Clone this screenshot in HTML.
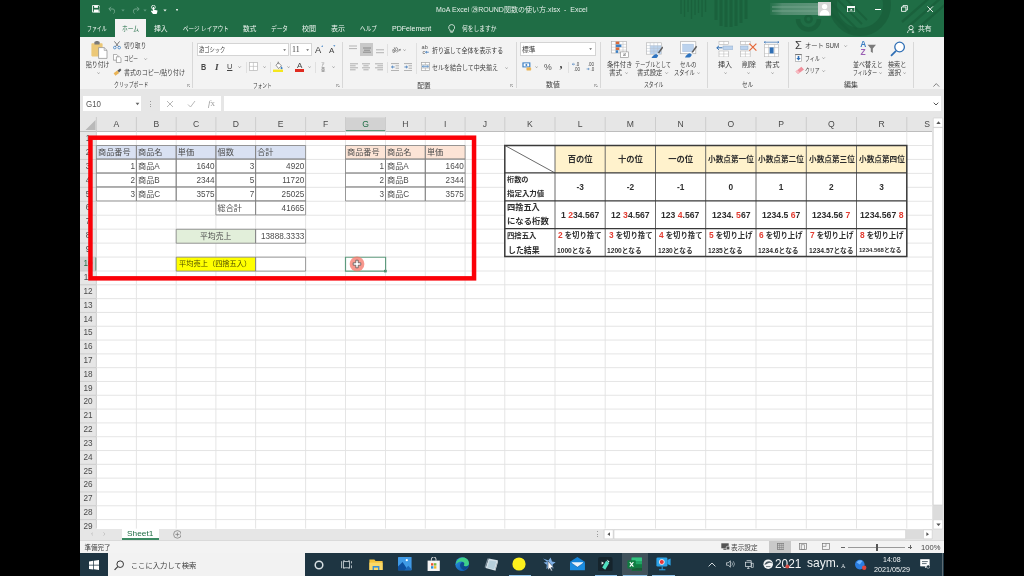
<!DOCTYPE html>
<html lang="ja"><head><meta charset="utf-8"><title>Excel</title><style>
html,body{margin:0;padding:0;background:#000;}
body{width:1024px;height:576px;overflow:hidden;position:relative;font-family:"Liberation Sans","Noto Sans CJK JP",sans-serif;}
#s{position:absolute;left:0;top:0;width:1024px;height:576px;overflow:hidden;background:#000;filter:blur(0.45px);}
#s div,#s svg{position:absolute;}
.ls{font-family:"Liberation Sans",sans-serif}
.t{position:absolute;white-space:nowrap;transform-origin:0 50%;left:0;}
</style></head><body><div id="s">
<div style="left:80.00px;top:0.00px;width:864.00px;height:36.60px;background:#1f6d45;"></div>
<div style="left:80.00px;top:36.60px;width:864.00px;height:52.30px;background:#f3f3f3;"></div>
<div style="left:80.00px;top:88.90px;width:864.00px;height:42.60px;background:#e6e6e6;"></div>
<div style="left:80.00px;top:131.50px;width:864.00px;height:397.20px;background:#fff;"></div>
<div style="left:80.00px;top:528.60px;width:864.00px;height:12.00px;background:#e6e6e6;"></div>
<div style="left:80.00px;top:540.50px;width:864.00px;height:12.80px;background:#f3f3f3;"></div>
<div style="left:80.00px;top:553.20px;width:864.00px;height:22.80px;background:#1e3542;"></div>
<svg style="left:676px;top:0" width="268" height="36.6" viewBox="0 0 268 36.6">
<g fill="none" stroke="#185c39" stroke-opacity="0.7">
<circle cx="184" cy="5" r="27" stroke-width="8"/>
<path d="M122 19a10.500 10.500 0 0 0 21 0" stroke-width="4.500"/>
<circle cx="132.500" cy="19" r="3.200" stroke-width="2.500"/>
<path d="M5 14V0M8.500 17V0M12 12V0M15.500 19V0M19 15V0M22.500 13V0M26 17V0M29.500 12V0" stroke-width="1.300"/>
<path d="M40 20V0M45 26V0M50 27V0M55 27V0M60 26V0M65 23V0M70 19V0" stroke-width="3"/>
<path d="M150 8l24 24M155 3l26 26M162 0l24 24M169 -2l22 22" stroke-width="2"/>
<path d="M226 22L258 -6M232 27L266 -3M239 31L272 2" stroke-width="2.400"/>
</g></svg>
<svg style="left:91.6px;top:5.4px" width="8.6" height="7.6" viewBox="0 0 9 8"><path d="M0.5 0.5h6.6l1.4 1.3v5.7h-8z" fill="none" stroke="#fff" stroke-width="0.9"/><rect x="2.2" y="0.6" width="4" height="2.4" fill="#fff"/><rect x="2" y="4.8" width="5" height="2.8" fill="#fff"/></svg>
<svg style="left:108px;top:5.8px" width="10" height="8" viewBox="0 0 10 8"><path d="M3 0.8L0.8 3l2.2 2.2M1 3h4.5a3 3 0 0 1 0 4.6" fill="none" stroke="#6fa58a" stroke-width="1"/></svg>
<svg style="left:129.5px;top:5.8px" width="10" height="8" viewBox="0 0 10 8"><path d="M7 0.8L9.2 3 7 5.2M9 3H4.5a3 3 0 0 0 0 4.6" fill="none" stroke="#6fa58a" stroke-width="1"/></svg>
<svg style="left:121px;top:8.6px" width="4" height="3" viewBox="0 0 4 3"><path d="M0.3 0.5h3.4L2 2.6z" fill="#5f9a7e"/></svg>
<svg style="left:143px;top:8.6px" width="4" height="3" viewBox="0 0 4 3"><path d="M0.3 0.5h3.4L2 2.6z" fill="#5f9a7e"/></svg>
<svg style="left:163px;top:8.6px" width="4" height="3" viewBox="0 0 4 3"><path d="M0.3 0.5h3.4L2 2.6z" fill="#e8efe9"/></svg>
<svg style="left:150px;top:4.6px" width="8" height="9.4" viewBox="0 0 8 9.4"><circle cx="3.4" cy="2.2" r="1.9" fill="none" stroke="#fff" stroke-width="0.8"/><path d="M2.8 2v4.2L1.6 5.6 0.9 6.3 3 9h3.6c0.6-1 0.9-2 0.9-3.4L4.1 4.8V2z" fill="#fff"/></svg>
<div style="left:176.40px;top:8.60px;width:1.80px;height:0.60px;background:#d5e3da;"></div>
<svg style="left:176.2px;top:9.600px" width="2.200" height="1.700" viewBox="0 0 3 2.2"><path d="M0.2 0.3h2.6L1.5 2z" fill="#d5e3da"/></svg>
<span id="t1" class="t" style="top:4px;font-size:6.7px;line-height:11px;color:#e6efe9;left:435.80px;transform:scaleX(1.0508);">MoA Excel ㉙ROUND関数の使い方.xlsx&nbsp; -&nbsp; Excel</span>
<svg style="left:770px;top:1.8px" width="48" height="14" viewBox="0 0 48 14"><defs><linearGradient id="ug" x1="0" x2="1"><stop offset="0" stop-color="#3f8060" stop-opacity="0.2"/><stop offset="0.25" stop-color="#4f8a6d"/><stop offset="1" stop-color="#5f957b"/></linearGradient></defs><rect x="0" y="1" width="48" height="12" fill="url(#ug)"/><rect x="2" y="4.2" width="46" height="1.6" fill="#7ea993" fill-opacity="0.5"/><rect x="2" y="8.2" width="46" height="1.6" fill="#7ea993" fill-opacity="0.5"/></svg>
<svg style="left:817.8px;top:2px" width="13.2" height="13.6" viewBox="0 0 13.2 13.6"><rect width="13.2" height="13.6" fill="#d6d6d6"/><circle cx="6.6" cy="4.6" r="2.7" fill="#fff"/><path d="M1.6 13.6c0-3.6 2-5.6 5-5.6s5 2 5 5.6z" fill="#fff"/></svg>
<svg style="left:847px;top:5.6px" width="8.4" height="6.6" viewBox="0 0 8.4 6.6"><rect x="0.5" y="0.5" width="7.4" height="5.6" fill="none" stroke="#fff" stroke-width="0.9"/><rect x="0.5" y="0.5" width="7.4" height="1.5" fill="#fff"/><path d="M4.2 2.8l1.5 1.6H2.7z" fill="#fff"/></svg>
<div style="left:874.50px;top:8.80px;width:6.40px;height:0.90px;background:#fff;"></div>
<svg style="left:901px;top:5.4px" width="7" height="7" viewBox="0 0 7 7"><path d="M0.5 2h4.4v4.4H0.5zM2 2V0.6h4.4V5H5" fill="none" stroke="#fff" stroke-width="0.85"/></svg>
<svg style="left:927.4px;top:5.6px" width="6.4" height="6.4" viewBox="0 0 6.4 6.4"><path d="M0.4 0.4l5.6 5.6M6 0.4L0.4 6" stroke="#fff" stroke-width="0.9"/></svg>
<div style="left:114.90px;top:19.00px;width:31.20px;height:17.80px;background:#f3f3f3;"></div>
<span id="t2" class="t" style="top:23px;font-size:6.7px;line-height:11px;color:#f1f6f2;left:86.80px;transform:scaleX(0.7327);">ファイル</span>
<span id="t3" class="t" style="top:23px;font-size:6.7px;line-height:11px;color:#f1f6f2;left:153.70px;transform:scaleX(1.0243);">挿入</span>
<span id="t4" class="t" style="top:23px;font-size:6.7px;line-height:11px;color:#f1f6f2;left:182.50px;transform:scaleX(0.8310);">ページ レイアウト</span>
<span id="t5" class="t" style="top:23px;font-size:6.7px;line-height:11px;color:#f1f6f2;left:243.00px;transform:scaleX(0.9944);">数式</span>
<span id="t6" class="t" style="top:23px;font-size:6.7px;line-height:11px;color:#f1f6f2;left:271.00px;transform:scaleX(0.8474);">データ</span>
<span id="t7" class="t" style="top:23px;font-size:6.7px;line-height:11px;color:#f1f6f2;left:302.20px;transform:scaleX(1.0542);">校閲</span>
<span id="t8" class="t" style="top:23px;font-size:6.7px;line-height:11px;color:#f1f6f2;left:331.00px;transform:scaleX(1.0467);">表示</span>
<span id="t9" class="t" style="top:23px;font-size:6.7px;line-height:11px;color:#f1f6f2;left:360.00px;transform:scaleX(0.8424);">ヘルプ</span>
<span id="t10" class="t" style="top:23px;font-size:6.7px;line-height:11px;color:#f1f6f2;left:391.90px;transform:scaleX(1.0519);">PDFelement</span>
<span id="t11" class="t" style="top:23px;font-size:6.7px;line-height:11px;color:#1f6d45;left:122.00px;transform:scaleX(0.8553);">ホーム</span>
<svg style="left:448px;top:23.6px" width="7.4" height="9.4" viewBox="0 0 7.4 9.4"><path d="M3.7 0.6a2.9 2.9 0 0 1 1.7 5.3v1.3H2V5.9A2.9 2.9 0 0 1 3.7 0.6z" fill="none" stroke="#f1f6f2" stroke-width="0.8"/><path d="M2.3 8.2h2.8M2.7 9.1h2" stroke="#f1f6f2" stroke-width="0.6"/></svg>
<span id="t12" class="t" style="top:23px;font-size:6.7px;line-height:11px;color:#f1f6f2;left:462.20px;transform:scaleX(0.8573);">何をしますか</span>
<svg style="left:906.5px;top:24.8px" width="8" height="8.6" viewBox="0 0 8 8.6"><circle cx="4" cy="2.6" r="2.1" fill="none" stroke="#f1f6f2" stroke-width="0.8"/><path d="M0.5 8.4c0-2.6 1.4-3.8 3.5-3.8 1 0 1.8 0.3 2.4 0.9M6 6v2.4M4.8 7.2h2.4" fill="none" stroke="#f1f6f2" stroke-width="0.8"/></svg>
<span id="t13" class="t" style="top:23px;font-size:6.7px;line-height:11px;color:#f1f6f2;left:917.80px;transform:scaleX(1.0243);">共有</span>
<svg style="left:90.6px;top:40.6px" width="17" height="18" viewBox="0 0 17 18"><rect x="0.4" y="2.2" width="11.2" height="13.2" rx="0.8" fill="#ecc877"/><rect x="3.4" y="0.6" width="5.2" height="3" rx="0.6" fill="#7a7a7a"/><rect x="4.6" y="0" width="2.8" height="1.6" rx="0.5" fill="#7a7a7a"/><path d="M7.6 6.6h5.6l2.8 2.8v8H7.6z" fill="#fff" stroke="#8a8a8a" stroke-width="0.7"/><path d="M13.2 6.6v2.8H16" fill="none" stroke="#8a8a8a" stroke-width="0.6"/></svg>
<span id="t14" class="t" style="top:59px;font-size:6.6px;line-height:11px;color:#3b3b3b;left:85.70px;transform:scaleX(0.8910);">貼り付け</span>
<svg style="left:96.80000000000001px;top:71.8px" width="3.2" height="2.2" viewBox="0 0 3.2 2.2"><path d="M0.3 0.4L1.6 1.7 2.9 0.4" fill="none" stroke="#808080" stroke-width="0.65"/></svg>
<svg style="left:113px;top:41.4px" width="8" height="8.4" viewBox="0 0 8 8.4"><path d="M1.4 0.4L5.6 5.6M6.6 0.4L2.4 5.6" stroke="#555" stroke-width="0.8" fill="none"/><circle cx="1.8" cy="6.6" r="1.3" fill="none" stroke="#3b7fc4" stroke-width="0.8"/><circle cx="6.2" cy="6.6" r="1.3" fill="none" stroke="#3b7fc4" stroke-width="0.8"/></svg>
<span id="t15" class="t" style="top:40px;font-size:6.6px;line-height:11px;color:#3b3b3b;left:123.80px;transform:scaleX(0.8417);">切り取り</span>
<svg style="left:113.2px;top:54.2px" width="8.4" height="9" viewBox="0 0 8.4 9"><path d="M0.4 0.4h3.2l1.4 1.4v4.4H0.4z" fill="#fff" stroke="#8a8a8a" stroke-width="0.7"/><path d="M3.4 2.8h3.2L8 4.2v4.4H3.4z" fill="#fff" stroke="#8a8a8a" stroke-width="0.7"/></svg>
<span id="t16" class="t" style="top:53px;font-size:6.6px;line-height:11px;color:#3b3b3b;left:123.80px;transform:scaleX(0.7077);">コピー</span>
<svg style="left:144.4px;top:58.4px" width="3.2" height="2.2" viewBox="0 0 3.2 2.2"><path d="M0.3 0.4L1.6 1.7 2.9 0.4" fill="none" stroke="#808080" stroke-width="0.65"/></svg>
<svg style="left:113.2px;top:68px" width="9" height="8.4" viewBox="0 0 9 8.4"><path d="M0.6 5.2l3.6-2.6 2 2.4-3.8 2.8z" fill="#eab456"/><path d="M4.4 2.6l2.8-2 1.2 1.4-2.4 2.6z" fill="#555"/></svg>
<span id="t17" class="t" style="top:67px;font-size:6.6px;line-height:11px;color:#3b3b3b;left:123.80px;transform:scaleX(0.8985);">書式のコピー/貼り付け</span>
<span id="t18" class="t" style="top:79px;font-size:6.6px;line-height:11px;color:#3b3b3b;left:114.30px;transform:scaleX(0.7431);">クリップボード</span>
<svg style="left:186.6px;top:83.6px" width="3.6" height="3.6" viewBox="0 0 3.6 3.6"><path d="M0.3 0.3V3M0.3 0.3H3M1.4 1.4l1.8 1.8M3.3 1.7v1.6H1.7" fill="none" stroke="#777" stroke-width="0.55"/></svg>
<div style="left:192.30px;top:41.50px;width:0.80px;height:46.00px;background:#d8d8d8;"></div>
<div style="left:197.00px;top:42.60px;width:91.80px;height:13.70px;background:#fff;box-sizing:border-box;border:0.8px solid #d4d4d4;"></div>
<div style="left:290.00px;top:42.60px;width:21.60px;height:13.70px;background:#fff;box-sizing:border-box;border:0.8px solid #d4d4d4;"></div>
<span id="t19" class="t" style="top:44px;font-size:6.6px;line-height:11px;color:#3b3b3b;left:198.60px;transform:scaleX(0.8008);">游ゴシック</span>
<span id="t20" class="t" style="top:44px;font-size:7.2px;line-height:12px;color:#3b3b3b;font-family:'Liberation Serif',serif;left:291.80px;transform:scaleX(1.0980);">11</span>
<svg style="left:282.9px;top:48.6px" width="3.2" height="2.2" viewBox="0 0 3.2 2.2"><path d="M0.2 0.3h2.8L1.6 2z" fill="#666"/></svg>
<svg style="left:305.9px;top:48.6px" width="3.2" height="2.2" viewBox="0 0 3.2 2.2"><path d="M0.2 0.3h2.8L1.6 2z" fill="#666"/></svg>
<span id="t21" class="t" style="top:43px;font-size:8.6px;line-height:14px;color:#3b3b3b;left:315.20px;transform:scaleX(1.0812);">A</span>
<svg style="left:320.6px;top:44.8px" width="2.6" height="2" viewBox="0 0 2.6 2"><path d="M0.2 1.8L1.3 0.3 2.4 1.8z" fill="#3b7fc4"/></svg>
<span id="t22" class="t" style="top:44px;font-size:7.4px;line-height:13px;color:#3b3b3b;left:328.60px;transform:scaleX(1.0734);">A</span>
<svg style="left:333.2px;top:45px" width="2.6" height="2" viewBox="0 0 2.6 2"><path d="M0.2 0.3L1.3 1.8 2.4 0.3z" fill="#3b7fc4"/></svg>
<span id="t23" class="t" style="top:61px;font-size:8.2px;line-height:13px;color:#444;font-weight:700;left:201.00px;transform:scaleX(0.8781);">B</span>
<span id="t24" class="t" style="top:61px;font-size:8.4px;line-height:13px;color:#444;font-weight:700;font-family:'Liberation Serif',serif;left:214.60px;transform:scaleX(1.1024);"><i>I</i></span>
<span id="t25" class="t" style="top:60px;font-size:8px;line-height:13px;color:#444;left:226.80px;transform:scaleX(0.9341);"><u>U</u></span>
<svg style="left:238.4px;top:66.2px" width="3.2" height="2.2" viewBox="0 0 3.2 2.2"><path d="M0.3 0.4L1.6 1.7 2.9 0.4" fill="none" stroke="#808080" stroke-width="0.65"/></svg>
<div style="left:246.00px;top:61.50px;width:0.80px;height:11.00px;background:#e0e0e0;"></div>
<svg style="left:249.4px;top:62.2px" width="8.8" height="8.8" viewBox="0 0 8.8 8.8"><rect x="0.4" y="0.4" width="8" height="8" fill="#fff" stroke="#b5b5b5" stroke-width="0.7"/><path d="M4.4 0.4v8M0.4 4.4h8" stroke="#b5b5b5" stroke-width="0.6"/></svg>
<svg style="left:262.59999999999997px;top:66.2px" width="3.2" height="2.2" viewBox="0 0 3.2 2.2"><path d="M0.3 0.4L1.6 1.7 2.9 0.4" fill="none" stroke="#808080" stroke-width="0.65"/></svg>
<div style="left:270.20px;top:61.50px;width:0.80px;height:11.00px;background:#e0e0e0;"></div>
<svg style="left:273px;top:60.6px" width="10.4" height="11.2" viewBox="0 0 10.4 11.2"><path d="M3 4.2L5.4 1.6 8.4 4.8 5.6 7.6z" fill="#fff" stroke="#666" stroke-width="0.7"/><path d="M5.2 0.6v2.6" stroke="#666" stroke-width="0.7"/><path d="M8.6 5.2c0.6 1 1 1.5 1 2a1 1 0 0 1-2 0c0-0.5 0.4-1 1-2z" fill="#3b7fc4"/><rect x="0" y="8.6" width="10.2" height="2.4" fill="#f4e61e"/></svg>
<svg style="left:286.59999999999997px;top:66.2px" width="3.2" height="2.2" viewBox="0 0 3.2 2.2"><path d="M0.3 0.4L1.6 1.7 2.9 0.4" fill="none" stroke="#808080" stroke-width="0.65"/></svg>
<span id="t26" class="t" style="top:59px;font-size:7.6px;line-height:13px;color:#444;left:296.60px;transform:scaleX(1.0634);">A</span>
<div style="left:294.70px;top:69.20px;width:9.40px;height:2.40px;background:#e02b20;"></div>
<svg style="left:308.0px;top:66.2px" width="3.2" height="2.2" viewBox="0 0 3.2 2.2"><path d="M0.3 0.4L1.6 1.7 2.9 0.4" fill="none" stroke="#808080" stroke-width="0.65"/></svg>
<div style="left:315.00px;top:61.50px;width:0.80px;height:11.00px;background:#e0e0e0;"></div>
<span id="t27" class="t" style="top:60px;font-size:4.2px;line-height:9px;color:#666;left:321.40px;transform:scaleX(0.8565);">ア</span>
<span id="t28" class="t" style="top:65px;font-size:4.6px;line-height:9px;color:#666;left:321.20px;transform:scaleX(0.9546);">亜</span>
<svg style="left:332.2px;top:66.2px" width="3.2" height="2.2" viewBox="0 0 3.2 2.2"><path d="M0.3 0.4L1.6 1.7 2.9 0.4" fill="none" stroke="#808080" stroke-width="0.65"/></svg>
<span id="t29" class="t" style="top:80px;font-size:6.6px;line-height:11px;color:#3b3b3b;left:253.30px;transform:scaleX(0.7090);">フォント</span>
<svg style="left:336px;top:83.6px" width="3.6" height="3.6" viewBox="0 0 3.6 3.6"><path d="M0.3 0.3V3M0.3 0.3H3M1.4 1.4l1.8 1.8M3.3 1.7v1.6H1.7" fill="none" stroke="#777" stroke-width="0.55"/></svg>
<div style="left:341.90px;top:41.50px;width:0.80px;height:46.00px;background:#d8d8d8;"></div>
<svg style="left:349.4px;top:44.6px" width="8" height="9" viewBox="0 0 8 9"><path d="M0 1H8" stroke="#a2a2a2" stroke-width="0.8"/><path d="M0 3.6H8" stroke="#a2a2a2" stroke-width="0.8"/></svg>
<div style="left:360.20px;top:43.00px;width:12.80px;height:13.30px;background:#c9c9c9;"></div>
<svg style="left:362.6px;top:45px" width="8" height="9" viewBox="0 0 8 9"><path d="M0 3H8" stroke="#7a7a7a" stroke-width="0.8"/><path d="M1 5.2H7" stroke="#7a7a7a" stroke-width="0.8"/><path d="M0 7.2H8" stroke="#7a7a7a" stroke-width="0.8"/></svg>
<svg style="left:375.6px;top:46px" width="8" height="9" viewBox="0 0 8 9"><path d="M0 3.8H8" stroke="#a2a2a2" stroke-width="0.8"/><path d="M0 6.7H8" stroke="#a2a2a2" stroke-width="0.8"/></svg>
<div style="left:387.20px;top:43.50px;width:0.80px;height:12.00px;background:#e0e0e0;"></div>
<svg style="left:391.6px;top:45px" width="9" height="8.4" viewBox="0 0 9 8.4"><text x="-0.4" y="6.200" font-size="6.200" fill="#505050" transform="rotate(-32 4 5)" class="ls">ab</text><path d="M4.6 7.4L8.4 4.4M8.4 4.4l-1.8 0.2M8.4 4.4l-0.5 1.7" stroke="#666" stroke-width="0.6" fill="none"/></svg>
<svg style="left:402.79999999999995px;top:49.0px" width="3.2" height="2.2" viewBox="0 0 3.2 2.2"><path d="M0.3 0.4L1.6 1.7 2.9 0.4" fill="none" stroke="#808080" stroke-width="0.65"/></svg>
<svg style="left:349.7px;top:62.6px" width="8" height="9" viewBox="0 0 8 9"><path d="M0 0.8H8" stroke="#9c9c9c" stroke-width="0.8"/><path d="M0 2.8H5.6" stroke="#9c9c9c" stroke-width="0.8"/><path d="M0 4.8H8" stroke="#9c9c9c" stroke-width="0.8"/><path d="M0 6.8H5.6" stroke="#9c9c9c" stroke-width="0.8"/></svg>
<svg style="left:362px;top:62.6px" width="8" height="9" viewBox="0 0 8 9"><path d="M0 0.8H8" stroke="#9c9c9c" stroke-width="0.8"/><path d="M1.4 2.8H6.6" stroke="#9c9c9c" stroke-width="0.8"/><path d="M0 4.8H8" stroke="#9c9c9c" stroke-width="0.8"/><path d="M1.4 6.8H6.6" stroke="#9c9c9c" stroke-width="0.8"/></svg>
<svg style="left:375.2px;top:62.6px" width="8" height="9" viewBox="0 0 8 9"><path d="M0 0.8H8" stroke="#9c9c9c" stroke-width="0.8"/><path d="M2.4 2.8H8" stroke="#9c9c9c" stroke-width="0.8"/><path d="M0 4.8H8" stroke="#9c9c9c" stroke-width="0.8"/><path d="M2.4 6.8H8" stroke="#9c9c9c" stroke-width="0.8"/></svg>
<div style="left:387.20px;top:61.50px;width:0.80px;height:11.00px;background:#e0e0e0;"></div>
<svg style="left:391px;top:62.6px" width="8.2" height="8.4" viewBox="0 0 8.2 8.4"><path d="M0 0.6h8.2M4.6 2.8h3.6M4.6 5.2h3.6M0 7.6h8.2" stroke="#9c9c9c" stroke-width="0.8"/><path d="M3.6 4H0.6M0.6 4l1.4-1.3M0.6 4l1.4 1.3" stroke="#2f6fb5" stroke-width="0.8" fill="none"/></svg>
<svg style="left:404.2px;top:62.6px" width="8.2" height="8.4" viewBox="0 0 8.2 8.4"><path d="M0 0.6h8.2M4.6 2.8h3.6M4.6 5.2h3.6M0 7.6h8.2" stroke="#9c9c9c" stroke-width="0.8"/><path d="M0.4 4h3M3.4 4L2 2.7M3.4 4L2 5.3" stroke="#2f6fb5" stroke-width="0.8" fill="none"/></svg>
<div style="left:416.20px;top:43.00px;width:0.80px;height:31.00px;background:#e0e0e0;"></div>
<svg style="left:421.4px;top:44.6px" width="8.8" height="9.4" viewBox="0 0 8.8 9.4"><text x="0.600" y="4.400" font-size="5.600" fill="#505050" class="ls">ab</text><text x="1.400" y="8.800" font-size="5.200" fill="#505050" class="ls">c</text><path d="M4.600 7.200h3.200M4.600 7.200l1.200-1M4.600 7.200l1.200 1" stroke="#2f6fb5" stroke-width="0.800" fill="none"/></svg>
<span id="t30" class="t" style="top:45px;font-size:6.6px;line-height:11px;color:#3b3b3b;left:432.30px;transform:scaleX(0.9020);">折り返して全体を表示する</span>
<svg style="left:420.9px;top:62.4px" width="8.8" height="8.8" viewBox="0 0 8.8 8.8"><rect x="0.4" y="0.4" width="8" height="8" fill="#fff" stroke="#a4a4a4" stroke-width="0.7"/><rect x="0.7" y="2.900" width="7.400" height="3" fill="#dbe8f5"/><path d="M0.4 2.8h8M0.4 6h8M4.4 0.4v2.4M4.4 6v2.4" stroke="#a4a4a4" stroke-width="0.6"/><path d="M1.4 4.4h6M1.4 4.4l1-0.8M1.4 4.4l1 0.8M7.4 4.4l-1-0.8M7.4 4.4l-1 0.8" stroke="#2f6fb5" stroke-width="0.55" fill="none"/></svg>
<span id="t31" class="t" style="top:62px;font-size:6.6px;line-height:11px;color:#3b3b3b;left:432.30px;transform:scaleX(0.9109);">セルを結合して中央揃え</span>
<svg style="left:504.59999999999997px;top:66.8px" width="3.2" height="2.2" viewBox="0 0 3.2 2.2"><path d="M0.3 0.4L1.6 1.7 2.9 0.4" fill="none" stroke="#808080" stroke-width="0.65"/></svg>
<span id="t32" class="t" style="top:80px;font-size:6.6px;line-height:11px;color:#3b3b3b;left:417.30px;">配置</span>
<svg style="left:509.6px;top:83.6px" width="3.6" height="3.6" viewBox="0 0 3.6 3.6"><path d="M0.3 0.3V3M0.3 0.3H3M1.4 1.4l1.8 1.8M3.3 1.7v1.6H1.7" fill="none" stroke="#777" stroke-width="0.55"/></svg>
<div style="left:515.50px;top:41.50px;width:0.80px;height:46.00px;background:#d8d8d8;"></div>
<div style="left:520.20px;top:42.40px;width:75.40px;height:13.70px;background:#fff;box-sizing:border-box;border:0.8px solid #d4d4d4;"></div>
<span id="t33" class="t" style="top:44px;font-size:6.6px;line-height:11px;color:#3b3b3b;left:522.00px;transform:scaleX(1.0161);">標準</span>
<svg style="left:589.4px;top:48.4px" width="3.2" height="2.2" viewBox="0 0 3.2 2.2"><path d="M0.2 0.3h2.8L1.6 2z" fill="#666"/></svg>
<svg style="left:521.6px;top:62.2px" width="10" height="9" viewBox="0 0 10 9"><rect x="0.4" y="0.4" width="8" height="5" fill="#3b7fc4"/><rect x="1.6" y="1.4" width="5.6" height="3" fill="#fff"/><circle cx="4.4" cy="2.9" r="1" fill="#3b7fc4"/><ellipse cx="6.800" cy="6.200" rx="2.600" ry="0.900" fill="#eab456"/><ellipse cx="6.800" cy="7.700" rx="2.600" ry="0.900" fill="#eab456"/></svg>
<svg style="left:534.8px;top:66.4px" width="3.2" height="2.2" viewBox="0 0 3.2 2.2"><path d="M0.3 0.4L1.6 1.7 2.9 0.4" fill="none" stroke="#808080" stroke-width="0.65"/></svg>
<span id="t34" class="t" style="top:60px;font-size:8.6px;line-height:14px;color:#555;left:544.20px;transform:scaleX(1.0188);">%</span>
<span id="t35" class="t" style="top:55px;font-size:12px;line-height:18px;color:#444;font-weight:700;font-family:'Liberation Serif',serif;left:559.40px;">,</span>
<div style="left:568.20px;top:61.50px;width:0.80px;height:11.00px;background:#e0e0e0;"></div>
<svg style="left:572px;top:62.4px" width="9.6" height="9" viewBox="0 0 9.6 9"><text x="3.4" y="3.8" font-size="4.5" fill="#444" class="ls">.0</text><text x="1.8" y="8.6" font-size="4.5" fill="#444" class="ls">.00</text><path d="M3 2.2H0.4M0.4 2.2l1-0.9M0.4 2.2l1 0.9" stroke="#2f6fb5" stroke-width="0.6" fill="none"/></svg>
<svg style="left:586px;top:62.4px" width="9.6" height="9" viewBox="0 0 9.6 9"><text x="1.8" y="3.8" font-size="4.5" fill="#444" class="ls">.00</text><text x="4.6" y="8.6" font-size="4.5" fill="#444" class="ls">.0</text><path d="M0.6 7h2.6M3.2 7l-1-0.9M3.2 7l-1 0.9" stroke="#2f6fb5" stroke-width="0.6" fill="none"/></svg>
<span id="t36" class="t" style="top:79px;font-size:6.6px;line-height:11px;color:#3b3b3b;left:546.00px;transform:scaleX(1.0464);">数値</span>
<svg style="left:594px;top:83.6px" width="3.6" height="3.6" viewBox="0 0 3.6 3.6"><path d="M0.3 0.3V3M0.3 0.3H3M1.4 1.4l1.8 1.8M3.3 1.7v1.6H1.7" fill="none" stroke="#777" stroke-width="0.55"/></svg>
<div style="left:599.80px;top:41.50px;width:0.80px;height:46.00px;background:#d8d8d8;"></div>
<svg style="left:611px;top:40.8px" width="18.4" height="17" viewBox="0 0 18.4 17"><rect x="0.4" y="0.4" width="15" height="11.6" fill="#fff" stroke="#a8a8a8" stroke-width="0.6"/><path d="M0.4 3.3h15M0.4 6.2h15M0.4 9.1h15M4.6 0.4v11.6M8.4 0.4v11.6M12 0.4v11.6" stroke="#b8b8b8" stroke-width="0.5"/><rect x="4.8" y="0.6" width="3.4" height="2.6" fill="#d86a3a"/><rect x="4.8" y="3.5" width="5.6" height="2.6" fill="#3b7fc4"/><rect x="4.8" y="6.4" width="3.4" height="2.6" fill="#d86a3a"/><rect x="4.8" y="9.3" width="2.4" height="2.6" fill="#3b7fc4"/><rect x="9.600" y="10.900" width="7.800" height="5.400" fill="#fff" stroke="#8a8a8a" stroke-width="0.600"/><path d="M12.600 15l2-2.800M12 13h3M12 14.400h3" stroke="#666" stroke-width="0.500"/></svg>
<span id="t37" class="t" style="top:59px;font-size:6.6px;line-height:11px;color:#3b3b3b;left:606.70px;transform:scaleX(0.9592);">条件付き</span>
<span id="t38" class="t" style="top:67px;font-size:6.6px;line-height:11px;color:#3b3b3b;left:609.20px;transform:scaleX(0.9858);">書式</span>
<svg style="left:625.0px;top:72.0px" width="3.2" height="2.2" viewBox="0 0 3.2 2.2"><path d="M0.3 0.4L1.6 1.7 2.9 0.4" fill="none" stroke="#808080" stroke-width="0.65"/></svg>
<svg style="left:645.6px;top:40.8px" width="17.6" height="17.6" viewBox="0 0 17.6 17.6"><rect x="0.400" y="1.800" width="15" height="11.400" fill="#fff" stroke="#b0b0b0" stroke-width="0.600"/><rect x="4.200" y="4.600" width="11" height="8.400" fill="#bcd3ee"/><path d="M0.400 4.600h15M0.400 7.400h15M0.400 10.200h15M4.200 1.800v11.400M7.900 1.800v11.400M11.600 1.800v11.400" stroke="#b4bfcc" stroke-width="0.500"/><path d="M11.400 12.200L16.200 5.600l1.200 0.900-4.700 6.600z" fill="#5c5c5c"/><path d="M5.400 17.200c0.800-2 2.600-3.800 5-4.200l1.800 1.200c-0.400 1.800-1.400 2.800-2.600 3z" fill="#2f74c0"/><path d="M10.600 13l1.400-1.200 1 0.800-0.800 1.600z" fill="#e8eef5"/></svg>
<span id="t39" class="t" style="top:59px;font-size:6.6px;line-height:11px;color:#3b3b3b;left:635.00px;transform:scaleX(0.7901);">テーブルとして</span>
<span id="t40" class="t" style="top:67px;font-size:6.6px;line-height:11px;color:#3b3b3b;left:637.00px;transform:scaleX(0.9630);">書式設定</span>
<svg style="left:665.4px;top:72.0px" width="3.2" height="2.2" viewBox="0 0 3.2 2.2"><path d="M0.3 0.4L1.6 1.7 2.9 0.4" fill="none" stroke="#808080" stroke-width="0.65"/></svg>
<svg style="left:680px;top:40.8px" width="17.6" height="17.6" viewBox="0 0 17.6 17.6"><rect x="0.400" y="0.700" width="15.400" height="12" fill="#fff" stroke="#b0b0b0" stroke-width="0.700"/><rect x="2.700" y="3.100" width="10.800" height="7.600" fill="#bcd3ee" stroke="#9db5d2" stroke-width="0.400"/><path d="M11.200 11.400L16 4.800l1.200 0.900-4.700 6.600z" fill="#5c5c5c"/><path d="M5 16.400c0.800-2 2.600-3.800 5-4.200l1.800 1.200c-0.400 1.800-1.400 2.800-2.600 3z" fill="#2f74c0"/><path d="M10.400 12.200l1.400-1.200 1 0.800-0.800 1.600z" fill="#e8eef5"/></svg>
<span id="t41" class="t" style="top:59px;font-size:6.6px;line-height:11px;color:#3b3b3b;left:680.00px;transform:scaleX(0.8341);">セルの</span>
<span id="t42" class="t" style="top:67px;font-size:6.6px;line-height:11px;color:#3b3b3b;left:674.00px;transform:scaleX(0.7810);">スタイル</span>
<svg style="left:697.0px;top:72.0px" width="3.2" height="2.2" viewBox="0 0 3.2 2.2"><path d="M0.3 0.4L1.6 1.7 2.9 0.4" fill="none" stroke="#808080" stroke-width="0.65"/></svg>
<span id="t43" class="t" style="top:79px;font-size:6.6px;line-height:11px;color:#3b3b3b;left:643.80px;transform:scaleX(0.7393);">スタイル</span>
<div style="left:706.90px;top:41.50px;width:0.80px;height:46.00px;background:#d8d8d8;"></div>
<svg style="left:715.6px;top:40.8px" width="17.6" height="16.4" viewBox="0 0 17.6 16.4"><rect x="3" y="0.4" width="9.6" height="3.2" fill="#fff" stroke="#b4b4b4" stroke-width="0.6"/><path d="M7.8 0.4v3.2" stroke="#b4b4b4" stroke-width="0.5"/><rect x="3" y="10" width="9.6" height="6" fill="#fff" stroke="#b4b4b4" stroke-width="0.6"/><path d="M7.8 10v6M3 13h9.6" stroke="#b4b4b4" stroke-width="0.5"/><rect x="7" y="5" width="10" height="3.6" fill="#bcd3ee" stroke="#8ea9c9" stroke-width="0.5"/><path d="M6.4 6.8H0.8M0.8 6.8l2.2-2M0.8 6.8l2.2 2" stroke="#2f6fb5" stroke-width="1" fill="none"/></svg>
<span id="t44" class="t" style="top:59px;font-size:6.6px;line-height:11px;color:#3b3b3b;left:717.60px;transform:scaleX(1.0692);">挿入</span>
<svg style="left:723.5px;top:71.8px" width="3.2" height="2.2" viewBox="0 0 3.2 2.2"><path d="M0.3 0.4L1.6 1.7 2.9 0.4" fill="none" stroke="#808080" stroke-width="0.65"/></svg>
<svg style="left:740.2px;top:40.8px" width="17.6" height="16.4" viewBox="0 0 17.6 16.4"><rect x="0.6" y="0.4" width="9.6" height="3.2" fill="#fff" stroke="#b4b4b4" stroke-width="0.6"/><path d="M5.4 0.4v3.2" stroke="#b4b4b4" stroke-width="0.5"/><rect x="0.6" y="10" width="9.6" height="6" fill="#fff" stroke="#b4b4b4" stroke-width="0.6"/><path d="M5.4 10v6M0.6 13h9.6" stroke="#b4b4b4" stroke-width="0.5"/><rect x="0.6" y="5" width="7.4" height="3.6" fill="#bcd3ee" stroke="#8ea9c9" stroke-width="0.5"/><path d="M9.4 2.6l7 7M16.4 2.6l-7 7" stroke="#e5683a" stroke-width="1.200" fill="none"/></svg>
<span id="t45" class="t" style="top:59px;font-size:6.6px;line-height:11px;color:#3b3b3b;left:741.50px;transform:scaleX(1.0768);">削除</span>
<svg style="left:747.1999999999999px;top:71.8px" width="3.2" height="2.2" viewBox="0 0 3.2 2.2"><path d="M0.3 0.4L1.6 1.7 2.9 0.4" fill="none" stroke="#808080" stroke-width="0.65"/></svg>
<svg style="left:763.4px;top:40.8px" width="17.6" height="16.4" viewBox="0 0 17.6 16.4"><rect x="1.6" y="3.4" width="14" height="12.4" fill="#fff" stroke="#b4b4b4" stroke-width="0.6"/><path d="M1.6 6.6h14M1.6 12.6h14M5.6 3.4v12.4M11.6 3.4v12.4" stroke="#b4b4b4" stroke-width="0.5"/><rect x="6.600" y="6.400" width="4" height="6" fill="#2f6fb5"/><path d="M1.2 1.2h14.8M1.2 1.2l1.4-1M1.2 1.2l1.4 1M16 1.2l-1.4-1M16 1.2l-1.4 1" stroke="#2f6fb5" stroke-width="0.7" fill="none"/></svg>
<span id="t46" class="t" style="top:59px;font-size:6.6px;line-height:11px;color:#3b3b3b;left:764.70px;transform:scaleX(1.1071);">書式</span>
<svg style="left:771.1999999999999px;top:71.8px" width="3.2" height="2.2" viewBox="0 0 3.2 2.2"><path d="M0.3 0.4L1.6 1.7 2.9 0.4" fill="none" stroke="#808080" stroke-width="0.65"/></svg>
<span id="t47" class="t" style="top:79px;font-size:6.6px;line-height:11px;color:#3b3b3b;left:742.00px;transform:scaleX(0.8493);">セル</span>
<div style="left:788.00px;top:41.50px;width:0.80px;height:46.00px;background:#d8d8d8;"></div>
<span id="t48" class="t" style="top:37px;font-size:10.6px;line-height:16px;color:#3a3a3a;left:795.20px;transform:scaleX(1.0667);">Σ</span>
<span id="t49" class="t" style="top:40px;font-size:6.6px;line-height:11px;color:#3b3b3b;left:805.00px;transform:scaleX(0.9430);">オート SUM</span>
<svg style="left:844.4px;top:44.8px" width="3.2" height="2.2" viewBox="0 0 3.2 2.2"><path d="M0.3 0.4L1.6 1.7 2.9 0.4" fill="none" stroke="#808080" stroke-width="0.65"/></svg>
<svg style="left:795.4px;top:53.6px" width="7" height="8" viewBox="0 0 7 8"><rect x="0.4" y="0.4" width="6.2" height="7.2" fill="#fff" stroke="#9a9a9a" stroke-width="0.6"/><path d="M0.400 0.600h6.200" stroke="#666" stroke-width="0.900"/><path d="M2.700 2h1.600v2h1.400L3.500 6.600 1.300 4h1.400z" fill="#2f6fb5"/></svg>
<span id="t50" class="t" style="top:53px;font-size:6.6px;line-height:11px;color:#3b3b3b;left:805.00px;transform:scaleX(0.7428);">フィル</span>
<svg style="left:822.4px;top:57.4px" width="3.2" height="2.2" viewBox="0 0 3.2 2.2"><path d="M0.3 0.4L1.6 1.7 2.9 0.4" fill="none" stroke="#808080" stroke-width="0.65"/></svg>
<svg style="left:795px;top:66.4px" width="9.4" height="8.4" viewBox="0 0 9.4 8.4"><path d="M0.500 5.400L6.400 0.800l2.600 2.600-5.900 4.600z" fill="#ef8f9b"/><path d="M0.500 5.400l1.800-1.400 2.600 2.600-1.800 1.400z" fill="#f6bcc3"/></svg>
<span id="t51" class="t" style="top:65px;font-size:6.6px;line-height:11px;color:#3b3b3b;left:805.00px;transform:scaleX(0.7381);">クリア</span>
<svg style="left:822.4px;top:70.2px" width="3.2" height="2.2" viewBox="0 0 3.2 2.2"><path d="M0.3 0.4L1.6 1.7 2.9 0.4" fill="none" stroke="#808080" stroke-width="0.65"/></svg>
<svg style="left:859.6px;top:40.6px" width="17" height="16.6" viewBox="0 0 17 16.6"><text x="0.2" y="6.400" font-size="8.400" font-weight="700" fill="#3b7fc4" class="ls">A</text><text x="0.600" y="14.300" font-size="8.400" font-weight="700" fill="#9a5fb4" class="ls">Z</text><path d="M7.600 3.800h8.400l-3.200 3.600v4.600l-2 -1.200V7.400z" fill="#7a7a7a"/></svg>
<span id="t52" class="t" style="top:59px;font-size:6.6px;line-height:11px;color:#3b3b3b;left:853.30px;transform:scaleX(0.9039);">並べ替えと</span>
<span id="t53" class="t" style="top:67px;font-size:6.6px;line-height:11px;color:#3b3b3b;left:852.60px;transform:scaleX(0.7307);">フィルター</span>
<svg style="left:879.0px;top:72.0px" width="3.2" height="2.2" viewBox="0 0 3.2 2.2"><path d="M0.3 0.4L1.6 1.7 2.9 0.4" fill="none" stroke="#808080" stroke-width="0.65"/></svg>
<svg style="left:890px;top:40.6px" width="16" height="16.6" viewBox="0 0 16 16.6"><circle cx="9.6" cy="6" r="4.8" fill="#fff" stroke="#2f6fb5" stroke-width="1.3"/><path d="M6 9.8L1 15" stroke="#2f6fb5" stroke-width="1.8"/></svg>
<span id="t54" class="t" style="top:59px;font-size:6.6px;line-height:11px;color:#3b3b3b;left:888.00px;transform:scaleX(0.9251);">検索と</span>
<span id="t55" class="t" style="top:67px;font-size:6.6px;line-height:11px;color:#3b3b3b;left:887.50px;transform:scaleX(0.9858);">選択</span>
<svg style="left:903.1999999999999px;top:72.0px" width="3.2" height="2.2" viewBox="0 0 3.2 2.2"><path d="M0.3 0.4L1.6 1.7 2.9 0.4" fill="none" stroke="#808080" stroke-width="0.65"/></svg>
<span id="t56" class="t" style="top:79px;font-size:6.6px;line-height:11px;color:#3b3b3b;left:843.60px;transform:scaleX(1.0540);">編集</span>
<div style="left:913.20px;top:41.50px;width:0.80px;height:46.00px;background:#d8d8d8;"></div>
<svg style="left:933px;top:83.4px" width="6.6" height="4" viewBox="0 0 6.6 4"><path d="M0.4 3.6L3.3 0.6l2.9 3" fill="none" stroke="#666" stroke-width="0.8"/></svg>
<div style="left:82.90px;top:95.90px;width:58.60px;height:15.30px;background:#fff;"></div>
<span id="t57" class="t" style="top:97px;font-size:8.4px;line-height:14px;color:#555;left:86.00px;transform:scaleX(0.9467);">G10</span>
<svg style="left:135px;top:102px" width="5" height="4" viewBox="0 0 5 4"><path d="M0.6 0.8h3.8L2.5 3.2z" fill="#666"/></svg>
<div style="left:150.00px;top:101.40px;width:1.00px;height:1.00px;background:#9a9a9a;"></div>
<div style="left:150.00px;top:103.60px;width:1.00px;height:1.00px;background:#9a9a9a;"></div>
<div style="left:150.00px;top:105.80px;width:1.00px;height:1.00px;background:#9a9a9a;"></div>
<div style="left:159.80px;top:95.90px;width:61.60px;height:15.30px;background:#fff;"></div>
<svg style="left:166px;top:99.5px" width="8" height="8" viewBox="0 0 8 8"><path d="M1 1l6 6M7 1L1 7" stroke="#b0b0b0" stroke-width="0.9" fill="none"/></svg>
<svg style="left:186.5px;top:99.5px" width="9" height="8" viewBox="0 0 9 8"><path d="M1 4.5l2.5 2.5L8 1" stroke="#b0b0b0" stroke-width="0.9" fill="none"/></svg>
<span id="t58" class="t" style="top:97px;font-size:7.6px;line-height:13px;color:#a0a0a0;font-family:'Liberation Serif',serif;left:208.00px;transform:scaleX(1.1821);"><i>f</i>x</span>
<div style="left:223.80px;top:95.90px;width:717.50px;height:15.30px;background:#fff;"></div>
<svg style="left:933px;top:102px" width="6" height="4" viewBox="0 0 6 4"><path d="M0.7 0.7L3 3l2.3-2.3" stroke="#555" stroke-width="1" fill="none"/></svg>
<svg style="left:0;top:0" width="1024" height="140"><rect x="345.5" y="117.4" width="40" height="14.1" fill="#d2d2d2"/><rect x="345.5" y="130.1" width="40" height="1.6" fill="#4f9170"/></svg>
<span id="t59" class="t" style="top:117px;font-size:8.6px;line-height:14px;color:#4a4a4a;left:113.53px;">A</span>
<span id="t60" class="t" style="top:117px;font-size:8.6px;line-height:14px;color:#4a4a4a;left:153.43px;">B</span>
<span id="t61" class="t" style="top:117px;font-size:8.6px;line-height:14px;color:#4a4a4a;left:192.94px;">C</span>
<span id="t62" class="t" style="top:117px;font-size:8.6px;line-height:14px;color:#4a4a4a;left:232.64px;">D</span>
<span id="t63" class="t" style="top:117px;font-size:8.6px;line-height:14px;color:#4a4a4a;left:277.73px;">E</span>
<span id="t64" class="t" style="top:117px;font-size:8.6px;line-height:14px;color:#4a4a4a;left:322.93px;">F</span>
<span id="t65" class="t" style="top:117px;font-size:8.6px;line-height:14px;color:#1f6d45;left:362.16px;">G</span>
<span id="t66" class="t" style="top:117px;font-size:8.6px;line-height:14px;color:#4a4a4a;left:402.29px;">H</span>
<span id="t67" class="t" style="top:117px;font-size:8.6px;line-height:14px;color:#4a4a4a;left:444.00px;">I</span>
<span id="t68" class="t" style="top:117px;font-size:8.6px;line-height:14px;color:#4a4a4a;left:482.80px;">J</span>
<span id="t69" class="t" style="top:117px;font-size:8.6px;line-height:14px;color:#4a4a4a;left:527.03px;">K</span>
<span id="t70" class="t" style="top:117px;font-size:8.6px;line-height:14px;color:#4a4a4a;left:577.71px;">L</span>
<span id="t71" class="t" style="top:117px;font-size:8.6px;line-height:14px;color:#4a4a4a;left:626.76px;">M</span>
<span id="t72" class="t" style="top:117px;font-size:8.6px;line-height:14px;color:#4a4a4a;left:677.49px;">N</span>
<span id="t73" class="t" style="top:117px;font-size:8.6px;line-height:14px;color:#4a4a4a;left:727.51px;">O</span>
<span id="t74" class="t" style="top:117px;font-size:8.6px;line-height:14px;color:#4a4a4a;left:778.28px;">P</span>
<span id="t75" class="t" style="top:117px;font-size:8.6px;line-height:14px;color:#4a4a4a;left:828.06px;">Q</span>
<span id="t76" class="t" style="top:117px;font-size:8.6px;line-height:14px;color:#4a4a4a;left:878.54px;">R</span>
<span id="t77" class="t" style="top:117px;font-size:8.6px;line-height:14px;color:#4a4a4a;left:924.13px;">S</span>
<svg style="left:85px;top:119.5px" width="10.5" height="10.5" viewBox="0 0 10 10"><path d="M10 0V10H0z" fill="#b9b9b9"/></svg>
<div style="left:80.00px;top:131.60px;width:16.40px;height:397.00px;background:#e6e6e6;"></div>
<span id="t78" class="t" style="top:132px;font-size:8.2px;line-height:13px;color:#4a4a4a;left:85.82px;">1</span>
<span id="t79" class="t" style="top:146px;font-size:8.2px;line-height:13px;color:#4a4a4a;left:85.82px;">2</span>
<span id="t80" class="t" style="top:160px;font-size:8.2px;line-height:13px;color:#4a4a4a;left:85.82px;">3</span>
<span id="t81" class="t" style="top:174px;font-size:8.2px;line-height:13px;color:#4a4a4a;left:85.82px;">4</span>
<span id="t82" class="t" style="top:188px;font-size:8.2px;line-height:13px;color:#4a4a4a;left:85.82px;">5</span>
<span id="t83" class="t" style="top:201px;font-size:8.2px;line-height:13px;color:#4a4a4a;left:85.82px;">6</span>
<span id="t84" class="t" style="top:215px;font-size:8.2px;line-height:13px;color:#4a4a4a;left:85.82px;">7</span>
<span id="t85" class="t" style="top:229px;font-size:8.2px;line-height:13px;color:#4a4a4a;left:85.82px;">8</span>
<span id="t86" class="t" style="top:243px;font-size:8.2px;line-height:13px;color:#4a4a4a;left:85.82px;">9</span>
<div style="left:80.00px;top:257.06px;width:16.00px;height:13.90px;background:#d2d2d2;"></div>
<div style="left:94.60px;top:257.06px;width:2.00px;height:13.90px;background:#78a78e;"></div>
<span id="t87" class="t" style="top:257px;font-size:8.2px;line-height:13px;color:#1f6d45;left:83.55px;">10</span>
<span id="t88" class="t" style="top:271px;font-size:8.2px;line-height:13px;color:#4a4a4a;left:83.85px;">11</span>
<span id="t89" class="t" style="top:285px;font-size:8.2px;line-height:13px;color:#4a4a4a;left:83.55px;">12</span>
<span id="t90" class="t" style="top:299px;font-size:8.2px;line-height:13px;color:#4a4a4a;left:83.55px;">13</span>
<span id="t91" class="t" style="top:313px;font-size:8.2px;line-height:13px;color:#4a4a4a;left:83.55px;">14</span>
<span id="t92" class="t" style="top:326px;font-size:8.2px;line-height:13px;color:#4a4a4a;left:83.55px;">15</span>
<span id="t93" class="t" style="top:340px;font-size:8.2px;line-height:13px;color:#4a4a4a;left:83.55px;">16</span>
<span id="t94" class="t" style="top:354px;font-size:8.2px;line-height:13px;color:#4a4a4a;left:83.55px;">17</span>
<span id="t95" class="t" style="top:368px;font-size:8.2px;line-height:13px;color:#4a4a4a;left:83.55px;">18</span>
<span id="t96" class="t" style="top:382px;font-size:8.2px;line-height:13px;color:#4a4a4a;left:83.55px;">19</span>
<span id="t97" class="t" style="top:395px;font-size:8.2px;line-height:13px;color:#4a4a4a;left:83.55px;">20</span>
<span id="t98" class="t" style="top:409px;font-size:8.2px;line-height:13px;color:#4a4a4a;left:83.55px;">21</span>
<span id="t99" class="t" style="top:423px;font-size:8.2px;line-height:13px;color:#4a4a4a;left:83.55px;">22</span>
<span id="t100" class="t" style="top:437px;font-size:8.2px;line-height:13px;color:#4a4a4a;left:83.55px;">23</span>
<span id="t101" class="t" style="top:451px;font-size:8.2px;line-height:13px;color:#4a4a4a;left:83.55px;">24</span>
<span id="t102" class="t" style="top:465px;font-size:8.2px;line-height:13px;color:#4a4a4a;left:83.55px;">25</span>
<span id="t103" class="t" style="top:478px;font-size:8.2px;line-height:13px;color:#4a4a4a;left:83.55px;">26</span>
<span id="t104" class="t" style="top:492px;font-size:8.2px;line-height:13px;color:#4a4a4a;left:83.55px;">27</span>
<span id="t105" class="t" style="top:506px;font-size:8.2px;line-height:13px;color:#4a4a4a;left:83.55px;">28</span>
<span id="t106" class="t" style="top:520px;font-size:8.2px;line-height:13px;color:#4a4a4a;left:83.55px;">29</span>
<svg style="left:0;top:0" width="1024" height="576" viewBox="0 0 1024 576" fill="none"><path d="M96.40 117.00V131.50M136.40 117.00V131.50M176.20 117.00V131.50M215.90 117.00V131.50M255.60 117.00V131.50M305.60 117.00V131.50M345.50 117.00V131.50M385.50 117.00V131.50M425.30 117.00V131.50M465.10 117.00V131.50M504.80 117.00V131.50M555.00 117.00V131.50M605.20 117.00V131.50M655.50 117.00V131.50M705.70 117.00V131.50M756.00 117.00V131.50M806.30 117.00V131.50M856.50 117.00V131.50M906.80 117.00V131.50M96.40 131.60V528.60M80.00 145.50H96.40M80.00 159.44H96.40M80.00 173.39H96.40M80.00 187.33H96.40M80.00 201.28H96.40M80.00 215.22H96.40M80.00 229.17H96.40M80.00 243.11H96.40M80.00 257.06H96.40M80.00 271.00H96.40M80.00 284.81H96.40M80.00 298.62H96.40M80.00 312.43H96.40M80.00 326.24H96.40M80.00 340.05H96.40M80.00 353.86H96.40M80.00 367.67H96.40M80.00 381.48H96.40M80.00 395.29H96.40M80.00 409.10H96.40M80.00 422.91H96.40M80.00 436.72H96.40M80.00 450.53H96.40M80.00 464.34H96.40M80.00 478.15H96.40M80.00 491.96H96.40M80.00 505.77H96.40M80.00 519.58H96.40M80.00 533.39H96.40" stroke="#c9c9c9" stroke-width="0.9"/><path d="M80.00 131.50H932.60" stroke="#d2d2d2" stroke-width="0.9"/><path d="M96.40 145.50H932.60M96.40 159.44H932.60M96.40 173.39H932.60M96.40 187.33H932.60M96.40 201.28H932.60M96.40 215.22H932.60M96.40 229.17H932.60M96.40 243.11H932.60M96.40 257.06H932.60M96.40 271.00H932.60M96.40 284.81H932.60M96.40 298.62H932.60M96.40 312.43H932.60M96.40 326.24H932.60M96.40 340.05H932.60M96.40 353.86H932.60M96.40 367.67H932.60M96.40 381.48H932.60M96.40 395.29H932.60M96.40 409.10H932.60M96.40 422.91H932.60M96.40 436.72H932.60M96.40 450.53H932.60M96.40 464.34H932.60M96.40 478.15H932.60M96.40 491.96H932.60M96.40 505.77H932.60M96.40 519.58H932.60M136.40 131.60V528.60M176.20 131.60V528.60M215.90 131.60V528.60M255.60 131.60V528.60M305.60 131.60V528.60M345.50 131.60V528.60M385.50 131.60V528.60M425.30 131.60V528.60M465.10 131.60V528.60M504.80 131.60V528.60M555.00 131.60V528.60M605.20 131.60V528.60M655.50 131.60V528.60M705.70 131.60V528.60M756.00 131.60V528.60M806.30 131.60V528.60M856.50 131.60V528.60M906.80 131.60V528.60" stroke="#e2e2e2" stroke-width="0.9"/></svg>
<svg style="left:0;top:0" width="1024" height="576" viewBox="0 0 1024 576" fill="none"><rect x="96.40" y="145.50" width="40.00" height="13.59" fill="#d9e1f2"/><rect x="96.40" y="159.09" width="40.00" height="13.95" fill="#fff"/><rect x="96.40" y="173.04" width="40.00" height="13.94" fill="#fff"/><rect x="96.40" y="186.98" width="40.00" height="13.94" fill="#fff"/><rect x="136.40" y="145.50" width="39.80" height="13.59" fill="#d9e1f2"/><rect x="136.40" y="159.09" width="39.80" height="13.95" fill="#fff"/><rect x="136.40" y="173.04" width="39.80" height="13.94" fill="#fff"/><rect x="136.40" y="186.98" width="39.80" height="13.94" fill="#fff"/><rect x="176.20" y="145.50" width="39.70" height="13.59" fill="#d9e1f2"/><rect x="176.20" y="159.09" width="39.70" height="13.95" fill="#fff"/><rect x="176.20" y="173.04" width="39.70" height="13.94" fill="#fff"/><rect x="176.20" y="186.98" width="39.70" height="13.94" fill="#fff"/><rect x="215.90" y="145.50" width="39.70" height="13.59" fill="#d9e1f2"/><rect x="215.90" y="159.09" width="39.70" height="13.95" fill="#fff"/><rect x="215.90" y="173.04" width="39.70" height="13.94" fill="#fff"/><rect x="215.90" y="186.98" width="39.70" height="13.94" fill="#fff"/><rect x="255.60" y="145.50" width="50.00" height="13.59" fill="#d9e1f2"/><rect x="255.60" y="159.09" width="50.00" height="13.95" fill="#fff"/><rect x="255.60" y="173.04" width="50.00" height="13.94" fill="#fff"/><rect x="255.60" y="186.98" width="50.00" height="13.94" fill="#fff"/><rect x="215.90" y="200.93" width="39.70" height="13.95" fill="#fff"/><rect x="255.60" y="200.93" width="50.00" height="13.95" fill="#fff"/><rect x="176.20" y="229.27" width="79.40" height="13.94" fill="#e2efda"/><rect x="255.60" y="229.27" width="50.00" height="13.94" fill="#fff"/><rect x="176.20" y="257.16" width="79.40" height="13.94" fill="#ffff00"/><rect x="255.60" y="257.16" width="50.00" height="13.94" fill="#fff"/><rect x="345.50" y="145.50" width="40.00" height="13.59" fill="#fce4d6"/><rect x="345.50" y="159.09" width="40.00" height="13.95" fill="#fff"/><rect x="345.50" y="173.04" width="40.00" height="13.94" fill="#fff"/><rect x="345.50" y="186.98" width="40.00" height="13.94" fill="#fff"/><rect x="385.50" y="145.50" width="39.80" height="13.59" fill="#fce4d6"/><rect x="385.50" y="159.09" width="39.80" height="13.95" fill="#fff"/><rect x="385.50" y="173.04" width="39.80" height="13.94" fill="#fff"/><rect x="385.50" y="186.98" width="39.80" height="13.94" fill="#fff"/><rect x="425.30" y="145.50" width="39.80" height="13.59" fill="#fce4d6"/><rect x="425.30" y="159.09" width="39.80" height="13.95" fill="#fff"/><rect x="425.30" y="173.04" width="39.80" height="13.94" fill="#fff"/><rect x="425.30" y="186.98" width="39.80" height="13.94" fill="#fff"/><rect x="345.50" y="257.06" width="40.00" height="13.90" fill="#fff"/><rect x="383.60" y="269.35" width="3.30" height="3.30" fill="#fff"/><rect x="384.10" y="269.85" width="2.50" height="2.50" fill="#1f6d45"/><rect x="504.80" y="145.40" width="402.00" height="111.16" fill="#fff"/><rect x="555.00" y="145.40" width="351.80" height="27.54" fill="#fff2cc"/><path d="M96.40 145.50H136.40V159.09H96.40ZM96.40 159.09H136.40V173.04H96.40ZM96.40 173.04H136.40V186.98H96.40ZM96.40 186.98H136.40V200.93H96.40ZM136.40 145.50H176.20V159.09H136.40ZM136.40 159.09H176.20V173.04H136.40ZM136.40 173.04H176.20V186.98H136.40ZM136.40 186.98H176.20V200.93H136.40ZM176.20 145.50H215.90V159.09H176.20ZM176.20 159.09H215.90V173.04H176.20ZM176.20 173.04H215.90V186.98H176.20ZM176.20 186.98H215.90V200.93H176.20ZM215.90 145.50H255.60V159.09H215.90ZM215.90 159.09H255.60V173.04H215.90ZM215.90 173.04H255.60V186.98H215.90ZM215.90 186.98H255.60V200.93H215.90ZM255.60 145.50H305.60V159.09H255.60ZM255.60 159.09H305.60V173.04H255.60ZM255.60 173.04H305.60V186.98H255.60ZM255.60 186.98H305.60V200.93H255.60ZM215.90 200.93H255.60V214.87H215.90ZM255.60 200.93H305.60V214.87H255.60ZM176.20 229.27H255.60V243.21H176.20ZM255.60 229.27H305.60V243.21H255.60ZM176.20 257.16H255.60V271.10H176.20ZM255.60 257.16H305.60V271.10H255.60ZM345.50 145.50H385.50V159.09H345.50ZM345.50 159.09H385.50V173.04H345.50ZM345.50 173.04H385.50V186.98H345.50ZM345.50 186.98H385.50V200.93H345.50ZM385.50 145.50H425.30V159.09H385.50ZM385.50 159.09H425.30V173.04H385.50ZM385.50 173.04H425.30V186.98H385.50ZM385.50 186.98H425.30V200.93H385.50ZM425.30 145.50H465.10V159.09H425.30ZM425.30 159.09H465.10V173.04H425.30ZM425.30 173.04H465.10V186.98H425.30ZM425.30 186.98H465.10V200.93H425.30Z" stroke="#808080" stroke-width="0.8"/><path d="M345.50 257.25H385.60V271.15H345.50Z" stroke="#5f9a7e" stroke-width="1.2"/><path d="M555.00 145.40V256.56M605.20 145.40V256.56M655.50 145.40V256.56M705.70 145.40V256.56M756.00 145.40V256.56M806.30 145.40V256.56M856.50 145.40V256.56" stroke="#5a5a5a" stroke-width="0.9"/><path d="M504.80 172.94H906.80M504.80 200.83H906.80M504.80 228.72H906.80" stroke="#3a3a3a" stroke-width="1.3"/><path d="M504.80 145.40H906.80V256.56H504.80Z" stroke="#3a3a3a" stroke-width="1.5"/><path d="M504.80 145.40L555.00 172.94" stroke="#444" stroke-width="0.8"/></svg>
<span id="t107" class="t" style="top:146px;font-size:8.15px;line-height:13px;color:#4c4c4c;left:98.00px;">商品番号</span>
<span id="t108" class="t" style="top:146px;font-size:8.15px;line-height:13px;color:#4c4c4c;left:138.00px;">商品名</span>
<span id="t109" class="t" style="top:146px;font-size:8.15px;line-height:13px;color:#4c4c4c;left:177.80px;">単価</span>
<span id="t110" class="t" style="top:146px;font-size:8.15px;line-height:13px;color:#4c4c4c;left:217.50px;">個数</span>
<span id="t111" class="t" style="top:146px;font-size:8.15px;line-height:13px;color:#4c4c4c;left:257.20px;">合計</span>
<span id="t112" class="t" style="top:160px;font-size:8.15px;line-height:13px;color:#4c4c4c;left:130.47px;">1</span>
<span id="t113" class="t" style="top:160px;font-size:8.15px;line-height:13px;color:#4c4c4c;left:138.00px;">商品A</span>
<span id="t114" class="t" style="top:160px;font-size:8.15px;line-height:13px;color:#4c4c4c;left:196.42px;">1640</span>
<span id="t115" class="t" style="top:160px;font-size:8.15px;line-height:13px;color:#4c4c4c;left:249.67px;">3</span>
<span id="t116" class="t" style="top:160px;font-size:8.15px;line-height:13px;color:#4c4c4c;left:286.12px;">4920</span>
<span id="t117" class="t" style="top:174px;font-size:8.15px;line-height:13px;color:#4c4c4c;left:130.47px;">2</span>
<span id="t118" class="t" style="top:174px;font-size:8.15px;line-height:13px;color:#4c4c4c;left:138.00px;">商品B</span>
<span id="t119" class="t" style="top:174px;font-size:8.15px;line-height:13px;color:#4c4c4c;left:196.42px;">2344</span>
<span id="t120" class="t" style="top:174px;font-size:8.15px;line-height:13px;color:#4c4c4c;left:249.67px;">5</span>
<span id="t121" class="t" style="top:174px;font-size:8.15px;line-height:13px;color:#4c4c4c;left:282.20px;">11720</span>
<span id="t122" class="t" style="top:188px;font-size:8.15px;line-height:13px;color:#4c4c4c;left:130.47px;">3</span>
<span id="t123" class="t" style="top:188px;font-size:8.15px;line-height:13px;color:#4c4c4c;left:138.00px;">商品C</span>
<span id="t124" class="t" style="top:188px;font-size:8.15px;line-height:13px;color:#4c4c4c;left:196.42px;">3575</span>
<span id="t125" class="t" style="top:188px;font-size:8.15px;line-height:13px;color:#4c4c4c;left:249.67px;">7</span>
<span id="t126" class="t" style="top:188px;font-size:8.15px;line-height:13px;color:#4c4c4c;left:281.61px;">25025</span>
<span id="t127" class="t" style="top:202px;font-size:8.15px;line-height:13px;color:#4c4c4c;left:217.50px;">総合計</span>
<span id="t128" class="t" style="top:202px;font-size:8.15px;line-height:13px;color:#4c4c4c;left:281.61px;">41665</span>
<span id="t129" class="t" style="top:230px;font-size:8.15px;line-height:13px;color:#4c4c4c;left:200.15px;transform:scaleX(0.9688);">平均売上</span>
<span id="t130" class="t" style="top:230px;font-size:8.15px;line-height:13px;color:#4c4c4c;left:260.90px;transform:scaleX(1.0084);">13888.3333</span>
<span id="t131" class="t" style="top:257px;font-size:7.2px;line-height:13px;color:#4d4a00;left:178.60px;transform:scaleX(1.0057);">平均売上（四捨五入）</span>
<span id="t132" class="t" style="top:146px;font-size:8.15px;line-height:13px;color:#4c4c4c;left:347.10px;">商品番号</span>
<span id="t133" class="t" style="top:146px;font-size:8.15px;line-height:13px;color:#4c4c4c;left:387.10px;">商品名</span>
<span id="t134" class="t" style="top:146px;font-size:8.15px;line-height:13px;color:#4c4c4c;left:426.90px;">単価</span>
<span id="t135" class="t" style="top:160px;font-size:8.15px;line-height:13px;color:#4c4c4c;left:379.57px;">1</span>
<span id="t136" class="t" style="top:160px;font-size:8.15px;line-height:13px;color:#4c4c4c;left:387.10px;">商品A</span>
<span id="t137" class="t" style="top:160px;font-size:8.15px;line-height:13px;color:#4c4c4c;left:445.62px;">1640</span>
<span id="t138" class="t" style="top:174px;font-size:8.15px;line-height:13px;color:#4c4c4c;left:379.57px;">2</span>
<span id="t139" class="t" style="top:174px;font-size:8.15px;line-height:13px;color:#4c4c4c;left:387.10px;">商品B</span>
<span id="t140" class="t" style="top:174px;font-size:8.15px;line-height:13px;color:#4c4c4c;left:445.62px;">2344</span>
<span id="t141" class="t" style="top:188px;font-size:8.15px;line-height:13px;color:#4c4c4c;left:379.57px;">3</span>
<span id="t142" class="t" style="top:188px;font-size:8.15px;line-height:13px;color:#4c4c4c;left:387.10px;">商品C</span>
<span id="t143" class="t" style="top:188px;font-size:8.15px;line-height:13px;color:#4c4c4c;left:445.62px;">3575</span>
<span id="t144" class="t" style="top:152px;font-size:8.3px;line-height:14px;color:#2e2e2e;font-weight:700;left:567.65px;">百の位</span>
<span id="t145" class="t" style="top:152px;font-size:8.3px;line-height:14px;color:#2e2e2e;font-weight:700;left:617.90px;">十の位</span>
<span id="t146" class="t" style="top:152px;font-size:8.3px;line-height:14px;color:#2e2e2e;font-weight:700;left:668.15px;">一の位</span>
<span id="t147" class="t" style="top:153px;font-size:7.7px;line-height:13px;color:#2e2e2e;font-weight:700;left:707.95px;transform:scaleX(0.9926);">小数点第一位</span>
<span id="t148" class="t" style="top:153px;font-size:7.7px;line-height:13px;color:#2e2e2e;font-weight:700;left:758.25px;transform:scaleX(0.9926);">小数点第二位</span>
<span id="t149" class="t" style="top:153px;font-size:7.7px;line-height:13px;color:#2e2e2e;font-weight:700;left:808.50px;transform:scaleX(0.9926);">小数点第三位</span>
<span id="t150" class="t" style="top:153px;font-size:7.7px;line-height:13px;color:#2e2e2e;font-weight:700;left:858.75px;transform:scaleX(0.9926);">小数点第四位</span>
<span id="t151" class="t" style="top:180px;font-size:8.3px;line-height:14px;color:#2e2e2e;font-weight:700;left:576.40px;">-3</span>
<span id="t152" class="t" style="top:180px;font-size:8.3px;line-height:14px;color:#2e2e2e;font-weight:700;left:626.65px;">-2</span>
<span id="t153" class="t" style="top:180px;font-size:8.3px;line-height:14px;color:#2e2e2e;font-weight:700;left:676.90px;">-1</span>
<span id="t154" class="t" style="top:180px;font-size:8.3px;line-height:14px;color:#2e2e2e;font-weight:700;left:728.54px;">0</span>
<span id="t155" class="t" style="top:180px;font-size:8.3px;line-height:14px;color:#2e2e2e;font-weight:700;left:778.84px;">1</span>
<span id="t156" class="t" style="top:180px;font-size:8.3px;line-height:14px;color:#2e2e2e;font-weight:700;left:829.09px;">2</span>
<span id="t157" class="t" style="top:180px;font-size:8.3px;line-height:14px;color:#2e2e2e;font-weight:700;left:879.34px;">3</span>
<span id="t158" class="t" style="top:208px;font-size:8.3px;line-height:14px;color:#2e2e2e;font-weight:700;left:560.95px;transform:scaleX(1.0369);">1 <span style="color:#e23b30">2</span>34.567</span>
<span id="t159" class="t" style="top:208px;font-size:8.3px;line-height:14px;color:#2e2e2e;font-weight:700;left:611.05px;transform:scaleX(1.0450);">12 <span style="color:#e23b30">3</span>4.567</span>
<span id="t160" class="t" style="top:208px;font-size:8.3px;line-height:14px;color:#2e2e2e;font-weight:700;left:661.45px;transform:scaleX(1.0369);">123 <span style="color:#e23b30">4</span>.567</span>
<span id="t161" class="t" style="top:208px;font-size:8.3px;line-height:14px;color:#2e2e2e;font-weight:700;left:711.55px;transform:scaleX(1.0450);">1234. <span style="color:#e23b30">5</span>67</span>
<span id="t162" class="t" style="top:208px;font-size:8.3px;line-height:14px;color:#2e2e2e;font-weight:700;left:762.00px;transform:scaleX(1.0369);">1234.5 <span style="color:#e23b30">6</span>7</span>
<span id="t163" class="t" style="top:208px;font-size:8.3px;line-height:14px;color:#2e2e2e;font-weight:700;left:812.25px;transform:scaleX(1.0373);">1234.56 <span style="color:#e23b30">7</span></span>
<span id="t164" class="t" style="top:208px;font-size:8.3px;line-height:14px;color:#2e2e2e;font-weight:700;left:859.90px;transform:scaleX(1.0470);">1234.567 <span style="color:#e23b30">8</span></span>
<span id="t165" class="t" style="top:229px;font-size:7.6px;line-height:13px;color:#2e2e2e;font-weight:700;left:558.30px;transform:scaleX(0.9697);"><span style="color:#e23b30;font-size:8.6px">2</span> を切り捨て</span>
<span id="t166" class="t" style="top:229px;font-size:7.6px;line-height:13px;color:#2e2e2e;font-weight:700;left:608.50px;transform:scaleX(0.9697);"><span style="color:#e23b30;font-size:8.6px">3</span> を切り捨て</span>
<span id="t167" class="t" style="top:229px;font-size:7.6px;line-height:13px;color:#2e2e2e;font-weight:700;left:658.80px;transform:scaleX(0.9697);"><span style="color:#e23b30;font-size:8.6px">4</span> を切り捨て</span>
<span id="t168" class="t" style="top:229px;font-size:7.6px;line-height:13px;color:#2e2e2e;font-weight:700;left:709.00px;transform:scaleX(0.9697);"><span style="color:#e23b30;font-size:8.6px">5</span> を切り上げ</span>
<span id="t169" class="t" style="top:229px;font-size:7.6px;line-height:13px;color:#2e2e2e;font-weight:700;left:759.30px;transform:scaleX(0.9697);"><span style="color:#e23b30;font-size:8.6px">6</span> を切り上げ</span>
<span id="t170" class="t" style="top:229px;font-size:7.6px;line-height:13px;color:#2e2e2e;font-weight:700;left:809.60px;transform:scaleX(0.9697);"><span style="color:#e23b30;font-size:8.6px">7</span> を切り上げ</span>
<span id="t171" class="t" style="top:229px;font-size:7.6px;line-height:13px;color:#2e2e2e;font-weight:700;left:859.80px;transform:scaleX(0.9697);"><span style="color:#e23b30;font-size:8.6px">8</span> を切り上げ</span>
<span id="t172" class="t" style="top:245px;font-size:6.3px;line-height:11px;color:#2e2e2e;font-weight:700;left:557.20px;transform:scaleX(1.0575);">1000となる</span>
<span id="t173" class="t" style="top:245px;font-size:6.3px;line-height:11px;color:#2e2e2e;font-weight:700;left:607.40px;transform:scaleX(1.0575);">1200となる</span>
<span id="t174" class="t" style="top:245px;font-size:6.3px;line-height:11px;color:#2e2e2e;font-weight:700;left:657.70px;transform:scaleX(1.0575);">1230となる</span>
<span id="t175" class="t" style="top:245px;font-size:6.3px;line-height:11px;color:#2e2e2e;font-weight:700;left:707.90px;transform:scaleX(1.0575);">1235となる</span>
<span id="t176" class="t" style="top:245px;font-size:6.3px;line-height:11px;color:#2e2e2e;font-weight:700;left:758.20px;transform:scaleX(1.0693);">1234.6となる</span>
<span id="t177" class="t" style="top:245px;font-size:6.3px;line-height:11px;color:#2e2e2e;font-weight:700;left:808.50px;transform:scaleX(1.0731);">1234.57となる</span>
<span id="t178" class="t" style="top:245px;font-size:5.6px;line-height:10px;color:#2e2e2e;font-weight:700;left:858.70px;transform:scaleX(1.0662);">1234.568となる</span>
<span id="t179" class="t" style="top:173px;font-size:7.3px;line-height:13px;color:#2e2e2e;font-weight:700;left:507.00px;transform:scaleX(0.9822);">桁数の</span>
<span id="t180" class="t" style="top:187px;font-size:7.4px;line-height:13px;color:#2e2e2e;font-weight:700;left:507.00px;transform:scaleX(1.0090);">指定入力値</span>
<span id="t181" class="t" style="top:201px;font-size:8.2px;line-height:13px;color:#2e2e2e;font-weight:700;left:507.00px;">四捨五入</span>
<span id="t182" class="t" style="top:214px;font-size:8.3px;line-height:14px;color:#2e2e2e;font-weight:700;left:507.00px;transform:scaleX(1.0072);">になる桁数</span>
<span id="t183" class="t" style="top:229px;font-size:7.4px;line-height:13px;color:#2e2e2e;font-weight:700;left:507.00px;transform:scaleX(0.9940);">四捨五入</span>
<span id="t184" class="t" style="top:244px;font-size:8.2px;line-height:13px;color:#2e2e2e;font-weight:700;left:508.00px;transform:scaleX(0.9644);">した結果</span>
<svg style="left:0;top:0" width="1024" height="576"><rect x="90.45" y="137.7" width="383.6" height="140.65" fill="none" stroke="#fb0007" stroke-width="4.5"/></svg>
<svg style="left:349.2px;top:256.2px" width="16" height="16" viewBox="0 0 16 16"><circle cx="8" cy="8" r="7.4" fill="#f6786b" fill-opacity="0.76"/><path d="M6.800 4.200h2.400v2.600h2.600v2.400H9.200v2.600H6.800V9.200H4.200V6.800h2.600z" fill="#fff" stroke="#4a4a4a" stroke-width="0.700"/></svg>
<div style="left:932.30px;top:117.00px;width:11.70px;height:423.40px;background:#e6e6e6;"></div>
<svg style="left:0;top:0" width="1024" height="576" viewBox="0 0 1024 576" fill="none"><rect x="932.80" y="127.40" width="10.40" height="392.60" fill="#dcdcdc"/><rect x="933.30" y="118.00" width="9.40" height="9.30" fill="#fff"/><rect x="933.30" y="127.60" width="9.40" height="377.40" fill="#fff"/><rect x="933.30" y="519.80" width="9.40" height="9.20" fill="#fff"/><path d="M933.30 118.00H942.70V127.30H933.30ZM933.30 127.60H942.70V505.00H933.30ZM933.30 519.80H942.70V529.00H933.30Z" stroke="#cfcfcf" stroke-width="0.6"/></svg>
<svg style="left:935.6px;top:121.2px" width="5" height="3.4" viewBox="0 0 5 3.4"><path d="M2.5 0.3L4.7 3H0.3z" fill="#555"/></svg>
<svg style="left:935.6px;top:523px" width="5" height="3.4" viewBox="0 0 5 3.4"><path d="M2.5 3.1L4.7 0.4H0.3z" fill="#555"/></svg>
<div style="left:80.00px;top:528.60px;width:523.00px;height:12.00px;background:#e6e6e6;"></div>
<svg style="left:90.6px;top:532.2px" width="2.6" height="4" viewBox="0 0 2.6 4"><path d="M2.2 0.3L0.5 2l1.7 1.7" fill="none" stroke="#b5b5b5" stroke-width="0.7"/></svg>
<svg style="left:102.6px;top:532.2px" width="2.6" height="4" viewBox="0 0 2.6 4"><path d="M0.4 0.3L2.1 2 0.4 3.7" fill="none" stroke="#b5b5b5" stroke-width="0.7"/></svg>
<div style="left:121.60px;top:528.60px;width:37.60px;height:10.40px;background:#fff;"></div>
<div style="left:121.60px;top:538.40px;width:37.60px;height:1.20px;background:#3c8a63;"></div>
<span id="t185" class="t" style="top:527px;font-size:7.3px;line-height:13px;color:#1f6d45;left:126.60px;transform:scaleX(1.1409);">Sheet1</span>
<svg style="left:172.6px;top:529.8px" width="8.8" height="8.8" viewBox="0 0 8.8 8.8"><circle cx="4.4" cy="4.4" r="3.8" fill="none" stroke="#777" stroke-width="0.7"/><path d="M4.4 2.4v4M2.4 4.4h4" stroke="#777" stroke-width="0.7"/></svg>
<div style="left:596.60px;top:531.40px;width:1.00px;height:1.00px;background:#9a9a9a;"></div>
<div style="left:596.60px;top:533.60px;width:1.00px;height:1.00px;background:#9a9a9a;"></div>
<div style="left:596.60px;top:535.80px;width:1.00px;height:1.00px;background:#9a9a9a;"></div>
<svg style="left:0;top:0" width="1024" height="576" viewBox="0 0 1024 576" fill="none"><rect x="603.60" y="529.40" width="328.80" height="9.80" fill="#dcdcdc"/><rect x="604.20" y="529.80" width="9.00" height="9.00" fill="#fff"/><rect x="614.00" y="529.80" width="291.60" height="9.00" fill="#fff"/><rect x="923.50" y="529.80" width="8.70" height="9.00" fill="#fff"/><path d="M604.20 529.80H613.20V538.80H604.20ZM614.00 529.80H905.60V538.80H614.00ZM923.50 529.80H932.20V538.80H923.50Z" stroke="#cfcfcf" stroke-width="0.6"/></svg>
<svg style="left:607px;top:532.2px" width="3.4" height="4.4" viewBox="0 0 3.4 4.4"><path d="M3 0.3L0.4 2.2 3 4.1z" fill="#555"/></svg>
<svg style="left:926.4px;top:532.2px" width="3.4" height="4.4" viewBox="0 0 3.4 4.4"><path d="M0.4 0.3L3 2.2 0.4 4.1z" fill="#555"/></svg>
<div style="left:80.00px;top:540.40px;width:864.00px;height:0.70px;background:#dadada;"></div>
<span id="t186" class="t" style="top:542px;font-size:6.5px;line-height:11px;color:#444;left:84.40px;">準備完了</span>
<svg style="left:720.8px;top:543.4px" width="9.4" height="7.4" viewBox="0 0 9.4 7.4"><rect x="0.3" y="0.3" width="7.4" height="5" fill="#555"/><rect x="2.4" y="5.6" width="3.2" height="1.2" fill="#555"/><circle cx="7" cy="5" r="1.9" fill="#555" stroke="#f3f3f3" stroke-width="0.6"/></svg>
<span id="t187" class="t" style="top:542px;font-size:6.5px;line-height:11px;color:#444;left:731.30px;transform:scaleX(1.0269);">表示設定</span>
<div style="left:769.30px;top:541.20px;width:21.80px;height:11.60px;background:#c9c9c9;"></div>
<svg style="left:776.6px;top:543.4px" width="7.4" height="7" viewBox="0 0 7.4 7"><rect x="0.4" y="0.4" width="6.6" height="6.2" fill="none" stroke="#777" stroke-width="0.7"/><path d="M0.4 2.4h6.6M0.4 4.5h6.6M2.6 0.4v6.2M4.8 0.4v6.2" stroke="#777" stroke-width="0.5"/></svg>
<svg style="left:799.4px;top:543.4px" width="7.8" height="7" viewBox="0 0 7.8 7"><rect x="0.4" y="0.4" width="7" height="6.2" fill="none" stroke="#777" stroke-width="0.7"/><rect x="2.2" y="1.8" width="3.4" height="4.8" fill="none" stroke="#777" stroke-width="0.6"/></svg>
<svg style="left:822px;top:543.4px" width="7.8" height="7" viewBox="0 0 7.8 7"><rect x="0.4" y="0.4" width="7" height="6.2" fill="none" stroke="#777" stroke-width="0.7"/><path d="M0.4 3.4h3.6V0.4" fill="none" stroke="#777" stroke-width="0.6"/></svg>
<div style="left:841.00px;top:546.70px;width:3.60px;height:0.80px;background:#666;"></div>
<div style="left:848.40px;top:546.80px;width:56.40px;height:0.70px;background:#9a9a9a;"></div>
<div style="left:875.80px;top:543.60px;width:1.80px;height:7.00px;background:#555;"></div>
<div style="left:908.20px;top:546.70px;width:3.80px;height:0.80px;background:#666;"></div>
<div style="left:909.70px;top:545.20px;width:0.80px;height:3.80px;background:#666;"></div>
<span id="t188" class="t" style="top:542px;font-size:6.6px;line-height:11px;color:#444;left:920.50px;transform:scaleX(1.1496);">100%</span>
<svg style="left:89.2px;top:560.4px" width="10" height="10" viewBox="0 0 10 10"><path d="M0 1.4l4.2-0.6v4H0zM4.9 0.7L10 0v4.8H4.9zM0 5.5h4.2v4L0 8.9zM4.9 5.5H10V10l-5.1-0.7z" fill="#fff"/></svg>
<div style="left:107.80px;top:553.20px;width:197.00px;height:22.80px;background:#f2f2f2;"></div>
<svg style="left:113.6px;top:560.2px" width="10.4" height="10.4" viewBox="0 0 10.4 10.4"><circle cx="6.2" cy="4.2" r="3.3" fill="none" stroke="#333" stroke-width="1"/><path d="M3.8 6.6L0.6 9.8" stroke="#333" stroke-width="1.1"/></svg>
<span id="t189" class="t" style="top:559px;font-size:7.3px;line-height:13px;color:#3a3a3a;left:130.80px;">ここに入力して検索</span>
<svg style="left:313.8px;top:559.6px" width="10" height="10" viewBox="0 0 10 10"><circle cx="5" cy="5" r="3.800" fill="none" stroke="#d8e0e3" stroke-width="1.500"/></svg>
<svg style="left:340.6px;top:559.8px" width="11.6" height="9.4" viewBox="0 0 11.6 9.4"><rect x="2.4" y="1.6" width="6.2" height="6.2" fill="none" stroke="#c9d2d6" stroke-width="0.9"/><path d="M0.6 1.2v7M10.6 1.2v2.2M10.6 5.4v2.8M2.4 0.6h1.2M7.4 0.6h1.2M2.4 8.8h1.2M7.4 8.8h1.2" stroke="#c9d2d6" stroke-width="0.9"/></svg>
<svg style="left:369px;top:557.6px" width="14" height="12.8" viewBox="0 0 14 12.8"><path d="M0.4 1.6h5l1.2 1.4h7v9.4H0.4z" fill="#f5c33b"/><path d="M0.4 4.6h13.2v7.8H0.4z" fill="#fbd968"/><rect x="3.6" y="8" width="6.8" height="4.4" fill="#3a8fd6"/><rect x="5" y="9.6" width="4" height="2.8" fill="#fbd968"/></svg>
<svg style="left:398px;top:557.4px" width="13.6" height="13.2" viewBox="0 0 13.6 13.2"><rect width="13.6" height="13.2" rx="0.600" fill="#3f9ae6"/><path d="M0 13.200V9.600L4.600 5l5.400 8.200z" fill="#0d4f9e"/><path d="M6.400 13.200L10.200 8.800l3.400 3.400v1z" fill="#1a66b8"/><circle cx="8.800" cy="3.200" r="1.100" fill="#fff"/></svg>
<svg style="left:426.8px;top:556.6px" width="13.4" height="14.4" viewBox="0 0 13.4 14.4"><path d="M4.4 3.6V2.2a2.3 2.3 0 0 1 4.6 0v1.4" fill="none" stroke="#f2f2f2" stroke-width="0.9"/><rect x="0.6" y="3.6" width="12.2" height="10.4" fill="#f4f4f4"/><rect x="4" y="6.2" width="2.4" height="2.4" fill="#e8552f"/><rect x="7" y="6.2" width="2.4" height="2.4" fill="#7bb83e"/><rect x="4" y="9.2" width="2.4" height="2.4" fill="#2c8fd8"/><rect x="7" y="9.2" width="2.4" height="2.4" fill="#f5b825"/></svg>
<svg style="left:455.4px;top:557px" width="14.4" height="14.4" viewBox="0 0 14.4 14.4"><defs><linearGradient id="eg" x1="0" y1="0.200" x2="0.800" y2="1"><stop offset="0" stop-color="#2a8fe0"/><stop offset="1" stop-color="#0c55a6"/></linearGradient></defs><circle cx="7.200" cy="7.200" r="6.900" fill="url(#eg)"/><path d="M1.200 5.200C2.400 2 5 0.400 8 0.400c3.400 0 6 2.600 6 5.800 0 2-1.400 3.200-3.200 3.200-1.200 0-2-0.500-2-1.200 0-0.600 0.500-0.900 0.500-1.600 0-1.200-1.200-2.200-2.900-2.200-2.200 0-4 1-5.200 2.800z" fill="#3fd08a"/><path d="M8.800 8.200c0 0.700 0.800 1.200 2 1.200 1.200 0 2.300-0.600 2.900-1.600-0.400 2.600-2.300 4.600-4.900 5.200-2.200-0.400-3.800-2.200-3.800-4.400 0-1.700 1-3 2.400-3.500 1.100 0.300 1.900 1 1.900 1.800 0 0.600-0.500 0.800-0.500 1.300z" fill="#0b3f7c" fill-opacity="0.700"/></svg>
<svg style="left:483.6px;top:557.6px" width="14.4" height="13" viewBox="0 0 14.4 13"><path d="M4.600 0.600l9.200 1.600-3 10.400-9.200-2.600z" fill="#d3e0e8"/><path d="M4.600 0.600L1.600 10l-1-0.800L3.400 0.400z" fill="#7d8f9b"/><path d="M5.600 2.400l6.600 1.200-2.200 7.600-6.600-1.800z" fill="#a9c7d6" fill-opacity="0.700"/><path d="M10.800 12.600l3-10.400 0.400 0.800-2.800 9.800z" fill="#f2f6f8"/></svg>
<svg style="left:512.4px;top:557.4px" width="14" height="14" viewBox="0 0 14 14"><circle cx="7" cy="7" r="6.600" fill="#fdf01c"/></svg>
<div style="left:508.80px;top:574.60px;width:22.60px;height:1.40px;background:#8fc3ea;"></div>
<svg style="left:541.6px;top:557px" width="14" height="14" viewBox="0 0 14 14"><path d="M1 1.600l5.400 1.800L8.600 0.600l1.400 3.800 3.600 0.800-3 2.400 0.800 4.200-3.400-2.200L4.400 12l0.400-4.200L1.600 5.600l3.600-0.600z" fill="#7fb0e6"/><path d="M6 4l5.600 6.400-2.600 0.200 1.400 2.800-1.200 0.600-1.400-2.800L6 13z" fill="#fff" stroke="#2b3f55" stroke-width="0.6"/></svg>
<svg style="left:570.2px;top:557.2px" width="14.8" height="13.4" viewBox="0 0 14.8 13.4"><path d="M0 4.800L7.400 0l7.400 4.800v8H0z" fill="#1384d8"/><path d="M1.600 5.200h11.600v3.600L7.400 10 1.600 8.800z" fill="#e9f3fb"/><path d="M0 5l7.400 5.200L14.800 5v8.200H0z" fill="#1b8de0"/><path d="M0 5l7.400 5.200L14.800 5" fill="none" stroke="#0a5ea8" stroke-width="0.600"/></svg>
<svg style="left:598.4px;top:556.8px" width="14.6" height="14.6" viewBox="0 0 14.6 14.6"><rect width="14.6" height="14.6" rx="2" fill="#15242c"/><path d="M4.200 10.600l4-6.800 3 2.200-4 6.800z" fill="#4fe0c0"/><path d="M8.800 2.600l2.800 2-1.400 0.800z" fill="#c9fff2"/><path d="M3.600 4.400l2.400 1.600-2.400 1.800z" fill="#e6f3f0"/></svg>
<div style="left:595.00px;top:574.60px;width:22.00px;height:1.40px;background:#8fc3ea;"></div>
<div style="left:621.60px;top:553.20px;width:26.60px;height:22.80px;background:#40525b;"></div>
<svg style="left:626.6px;top:557px" width="15.4" height="14.4" viewBox="0 0 15.4 14.4"><rect x="4.600" y="0.600" width="10.400" height="13.200" rx="0.800" fill="#21a366"/><rect x="4.600" y="0.600" width="10.400" height="3.400" fill="#33c481"/><rect x="4.600" y="7.200" width="10.400" height="3.300" fill="#107c41"/><rect x="4.600" y="10.500" width="10.400" height="3.300" fill="#185c37"/><rect x="0.400" y="3.200" width="8.400" height="8.400" rx="0.800" fill="#107c41"/><path d="M2.800 5.200l3.600 4.400M6.400 5.200L2.800 9.600" stroke="#fff" stroke-width="1.100"/></svg>
<div style="left:622.60px;top:574.60px;width:24.60px;height:1.40px;background:#8fc3ea;"></div>
<svg style="left:656px;top:557.2px" width="15" height="13.6" viewBox="0 0 15 13.6"><rect x="0.400" y="0.400" width="11" height="9.200" rx="1.400" fill="#2aa3e8"/><path d="M11.400 3l3.200-1.600v7.200L11.400 7z" fill="#2aa3e8"/><circle cx="5.800" cy="5" r="2.500" fill="#e8363c" stroke="#fff" stroke-width="0.800"/><path d="M3 12.800h6.400M6.200 9.600v3.200" stroke="#2aa3e8" stroke-width="1"/></svg>
<div style="left:652.00px;top:574.60px;width:22.60px;height:1.40px;background:#8fc3ea;"></div>
<svg style="left:708.4px;top:561.6px" width="8" height="5" viewBox="0 0 8 5"><path d="M0.600 4.400L4 1l3.400 3.400" fill="none" stroke="#e6ecef" stroke-width="0.900"/></svg>
<svg style="left:726.2px;top:560.2px" width="9.6" height="8" viewBox="0 0 9.6 8"><path d="M0.400 2.800h1.800L4.400 0.800v6.400L2.200 5.200H0.400z" fill="none" stroke="#e6ecef" stroke-width="0.700"/><path d="M5.800 2.400a2.200 2.200 0 0 1 0 3.200M7.200 1.200a4 4 0 0 1 0 5.600" fill="none" stroke="#b8c3c8" stroke-width="0.700"/></svg>
<svg style="left:745.4px;top:559.8px" width="8.6" height="9" viewBox="0 0 8.6 9"><rect x="0.400" y="2.200" width="5.800" height="4.400" fill="none" stroke="#e6ecef" stroke-width="0.700"/><path d="M2 8.400h2.600M3.300 6.600v1.800M1.600 0.600h4.600v1.600" fill="none" stroke="#e6ecef" stroke-width="0.700"/><rect x="6.200" y="3.200" width="2" height="4.200" fill="none" stroke="#e6ecef" stroke-width="0.600"/></svg>
<svg style="left:762.6px;top:558.6px" width="10.4" height="10.4" viewBox="0 0 10.4 10.4"><circle cx="5.200" cy="5.200" r="4.800" fill="#f2f4f5"/><path d="M1.400 5.600c1-2.400 3-3.600 5.600-3.200 1.200 0.200 2 1 2.400 2-1.600-0.800-3.400-0.800-4.800 0.200C3.600 5.400 2.600 5.800 1.400 5.600z" fill="#4a5a63"/><path d="M3 7.600h4.400" stroke="#4a5a63" stroke-width="0.800"/></svg>
<span id="t190" class="t" style="top:554px;font-size:13px;line-height:19px;color:#f4f6f7;left:775.00px;transform:scaleX(0.9093);">2021</span>
<svg style="left:785.4px;top:564.4px" width="5" height="5" viewBox="0 0 5 5"><circle cx="2.400" cy="2.400" r="2" fill="#e0453c" fill-opacity="0.9"/></svg>
<span id="t191" class="t" style="top:553px;font-size:13px;line-height:19px;color:#eef1f2;left:807.20px;transform:scaleX(0.9287);">saym.</span>
<span id="t192" class="t" style="top:560px;font-size:7px;line-height:12px;color:#dfe5e8;font-family:'Liberation Serif',serif;left:840.60px;transform:scaleX(0.8691);">A</span>
<svg style="left:853.8px;top:558.8px" width="13" height="12" viewBox="0 0 13 12"><circle cx="5.800" cy="5.600" r="4.800" fill="#2a7de0"/><path d="M2.600 3.400a4.800 4.800 0 0 1 6-1.600L5.800 5.600z" fill="#6db4ff"/><circle cx="10.200" cy="8.800" r="2.200" fill="#e0453c"/></svg>
<span id="t193" class="t" style="top:554px;font-size:6.3px;line-height:11px;color:#f2f5f6;left:882.80px;transform:scaleX(1.1164);">14:08</span>
<span id="t194" class="t" style="top:564px;font-size:6.3px;line-height:11px;color:#f2f5f6;left:873.60px;transform:scaleX(1.1423);">2021/05/29</span>
<svg style="left:920.2px;top:559.4px" width="9.8" height="9.6" viewBox="0 0 9.8 9.6"><path d="M0.500 0.500h8.800v6.600H6.800L5.600 8.900V7.100H0.500z" fill="#fff" stroke="#fff" stroke-width="0.600"/><path d="M2 2.600h5.800M2 4.600h4.600" stroke="#1e3542" stroke-width="0.700"/><circle cx="8.200" cy="7.600" r="1.700" fill="#1e3542" stroke="#fff" stroke-width="0.500"/></svg>
<div style="left:941.60px;top:553.20px;width:0.70px;height:22.80px;background:#5c6b73;"></div>
</div></body></html>
